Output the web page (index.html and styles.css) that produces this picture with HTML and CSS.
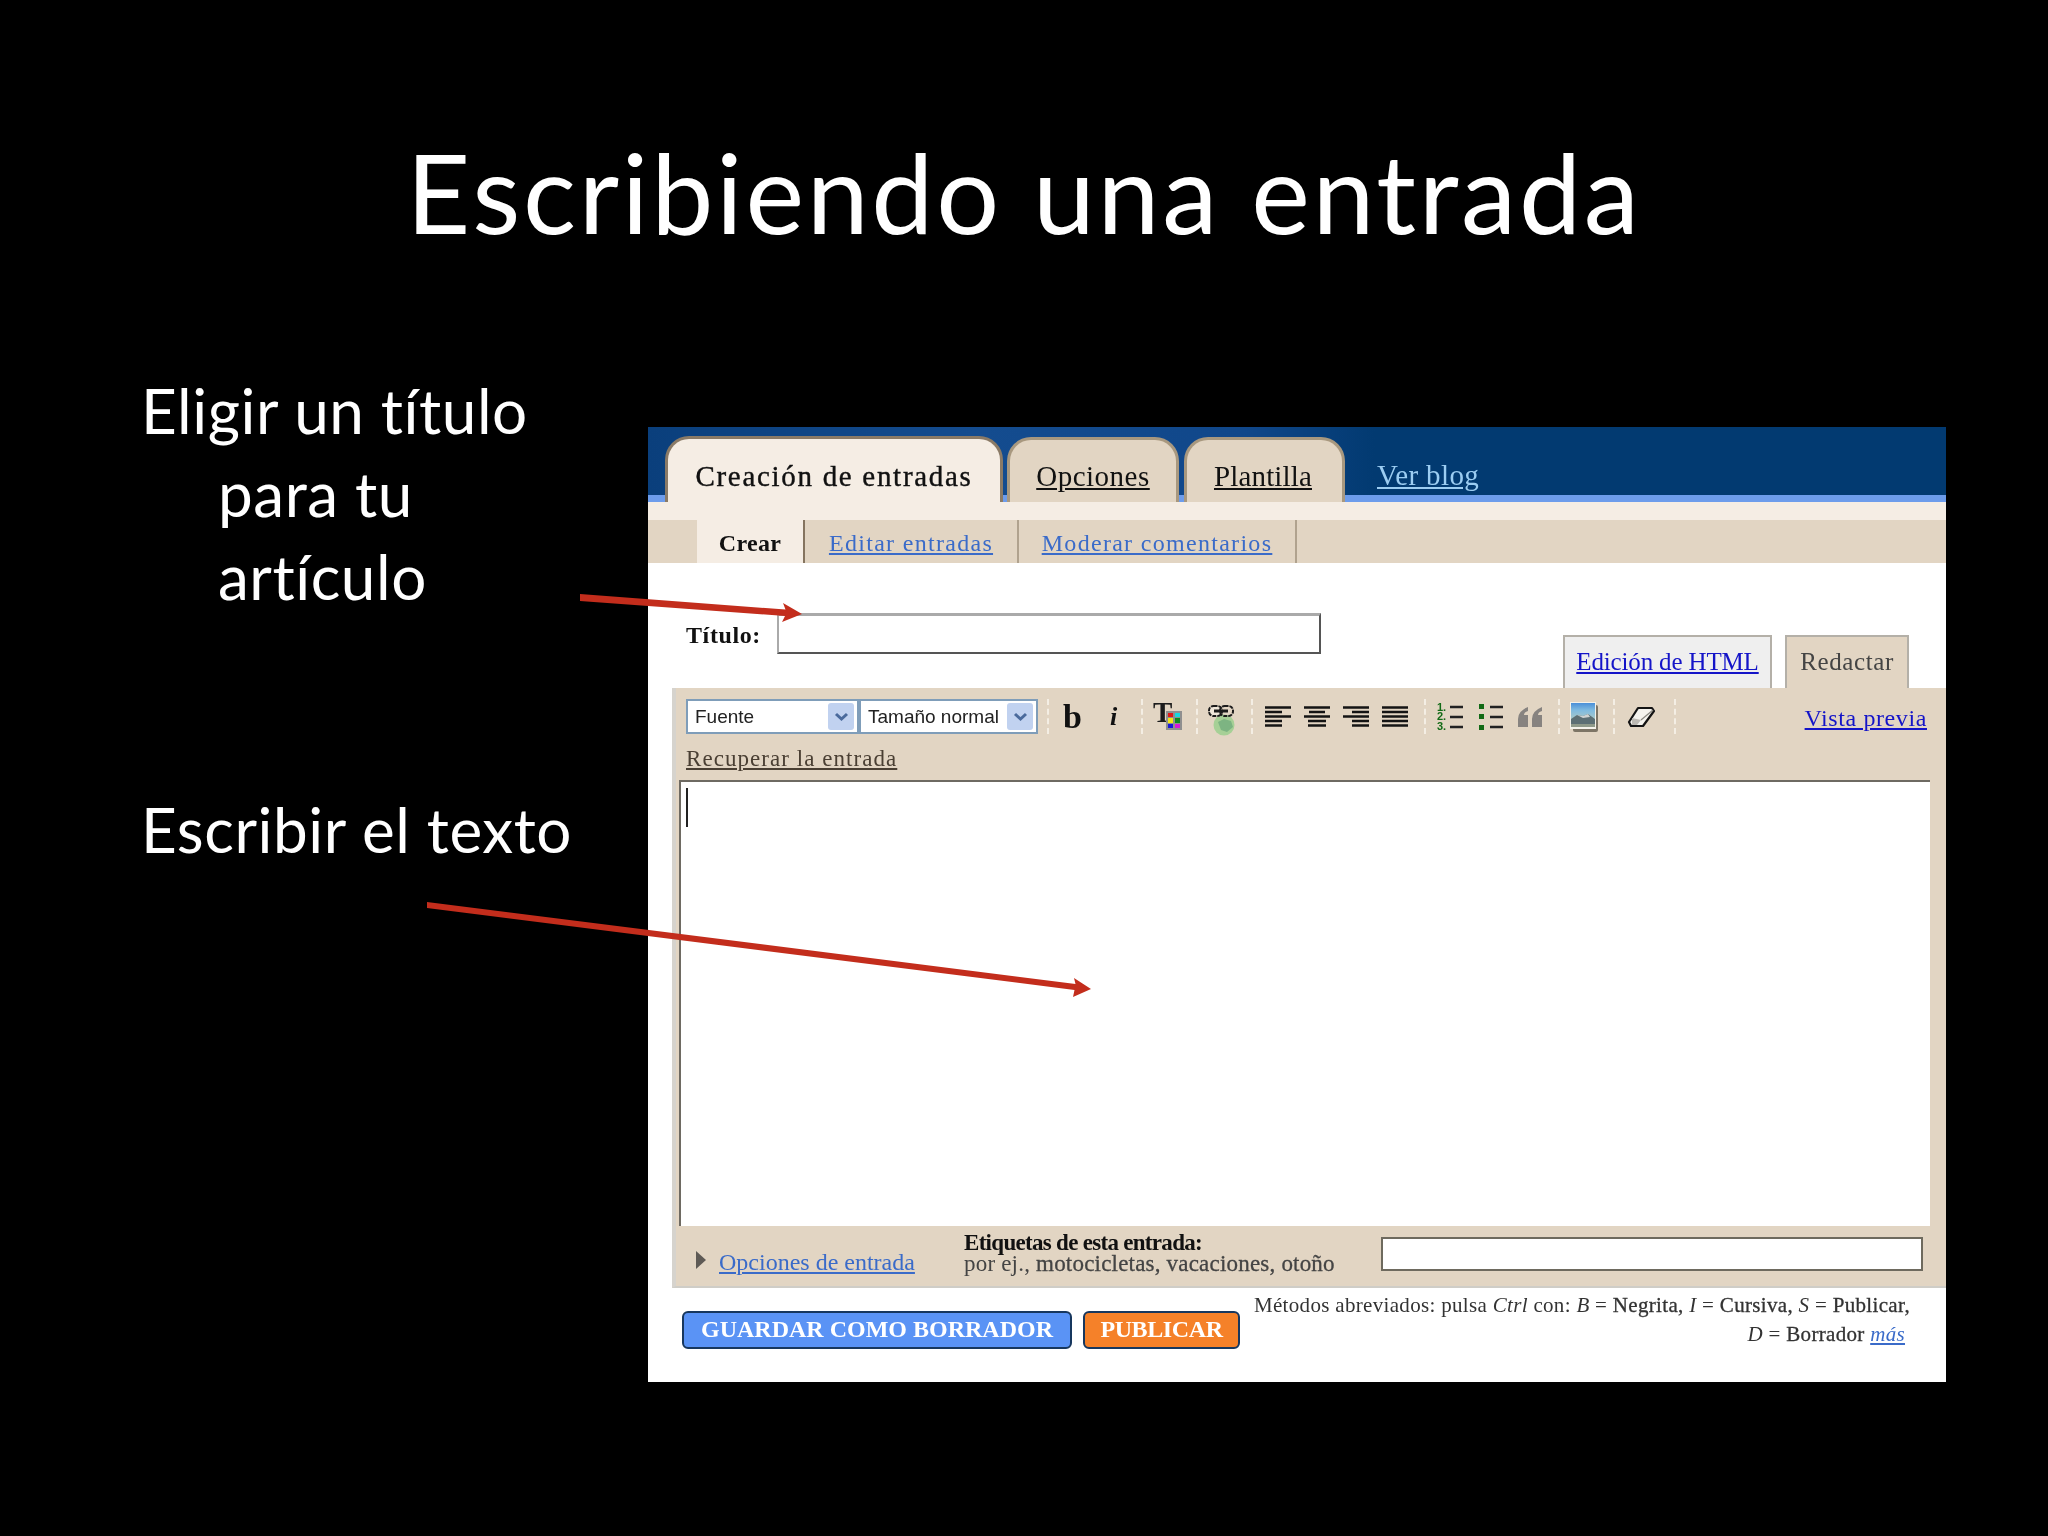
FILE: index.html
```html
<!DOCTYPE html>
<html lang="es">
<head>
    <meta charset="UTF-8">
    <title>Escribiendo una entrada</title>
    <link rel="stylesheet" href="styles.css">
</head>
<body>
<div class="slide">
    <h1 class="slide-title">Escribiendo una entrada</h1>

    <div class="slide-body">
        <div class="notes">
            <p class="note">Eligir un título<br><span class="indent">para tu</span><br><span class="indent">artículo</span></p>
            <p class="note note-second">Escribir el texto</p>
        </div>

        <div class="shot">
            <!-- Pestañas principales -->
            <div class="top-bar">
                <a class="top-tab top-tab-active">Creación de entradas</a>
                <a class="top-tab top-tab-options"><u>Opciones</u></a>
                <a class="top-tab top-tab-template"><u>Plantilla</u></a>
                <a class="view-blog">Ver blog</a>
            </div>
            <div class="cream-strip"></div>
            <div class="sub-nav">
                <a class="sub-tab sub-create">Crear</a>
                <a class="sub-tab sub-edit"><u>Editar entradas</u></a>
                <a class="sub-tab sub-moderate"><u>Moderar comentarios</u></a>
            </div>

            <div class="title-area">
                <label class="title-label">Título:</label>
                <div class="title-input"></div>
                <div class="mode-tabs">
                    <a class="mode-tab mode-html"><u>Edición de HTML</u></a>
                    <a class="mode-tab mode-write">Redactar</a>
                </div>
            </div>

            <!-- Editor -->
            <div class="editor">
                <div class="toolbar">
                    <div class="select select-font"><span>Fuente</span><i class="select-arrow"><svg width="15" height="10" viewBox="0 0 15 10"><path d="M2 2l5.500 5 5.500-5" fill="none" stroke="#4a6a9c" stroke-width="3"/></svg></i></div>
                    <div class="select select-size"><span>Tamaño normal</span><i class="select-arrow"><svg width="15" height="10" viewBox="0 0 15 10"><path d="M2 2l5.500 5 5.500-5" fill="none" stroke="#4a6a9c" stroke-width="3"/></svg></i></div>

                    <div class="group group-format">
                        <span class="tool tool-bold">b</span>
                        <span class="tool tool-italic">i</span>
                    </div>
                    <div class="group group-one">
                        <svg class="icon-color" width="30" height="29" viewBox="0 0 30 29">
                            <text x="0" y="20" class="svg-t">T</text>
                            <rect x="13" y="9" width="16" height="19" fill="#8f8f8f"/>
                            <rect x="15" y="11" width="5" height="4" fill="#e01818"/><rect x="22" y="11" width="5" height="4" fill="#18d8e0"/>
                            <rect x="15" y="16" width="5" height="5" fill="#f2e818"/><rect x="22" y="16" width="5" height="5" fill="#0f8a1f"/>
                            <rect x="15" y="22" width="5" height="4" fill="#1818d8"/><rect x="22" y="22" width="5" height="4" fill="#d818d8"/>
                        </svg>
                    </div>
                    <div class="group group-one">
                        <svg class="icon-link" width="30" height="38" viewBox="0 0 30 38">
                            <circle cx="16" cy="27" r="10.500" fill="#a6d096"/>
                            <path d="M10 24l6-3 7 2 2 6-6 5-6-2z" fill="#7db482"/>
                            <rect x="1" y="8" width="13" height="10" rx="4.500" fill="#efe7da" stroke="#1c1c1c" stroke-width="2" stroke-dasharray="4 1"/>
                            <rect x="12" y="8" width="13" height="10" rx="4.500" fill="none" stroke="#1c1c1c" stroke-width="2" stroke-dasharray="4 1"/>
                            <path d="M6 13h14" stroke="#1c1c1c" stroke-width="3"/>
                        </svg>
                    </div>
                    <div class="group group-align">
                        <span class="tool-align"><svg width="26" height="22" viewBox="0 0 26 22"><path d="M0 1.500h26M0 6h17M0 10.500h26M0 15h17M0 19.500h17" stroke="#141414" stroke-width="2.500"/></svg></span>
                        <span class="tool-align"><svg width="26" height="22" viewBox="0 0 26 22"><path d="M0 1.500h26M5 6h16M0 10.500h26M4 15h18M4 19.500h18" stroke="#141414" stroke-width="2.500"/></svg></span>
                        <span class="tool-align"><svg width="26" height="22" viewBox="0 0 26 22"><path d="M0 1.500h26M9 6h17M0 10.500h26M9 15h17M9 19.500h17" stroke="#141414" stroke-width="2.500"/></svg></span>
                        <span class="tool-align"><svg width="26" height="22" viewBox="0 0 26 22"><path d="M0 1.500h26M0 6h26M0 10.500h26M0 15h26M0 19.500h26" stroke="#141414" stroke-width="2.500"/></svg></span>
                    </div>
                    <div class="group group-list">
                        <span class="tool-list"><svg width="26" height="30" viewBox="0 0 26 30">
                            <text x="0" y="9" class="svg-num">1.</text><text x="0" y="18" class="svg-num">2.</text><text x="0" y="28" class="svg-num">3.</text>
                            <path d="M13 5h13M13 15h13M13 25h13" stroke="#222" stroke-width="2.500"/>
                        </svg></span>
                        <span class="tool-list"><svg width="26" height="30" viewBox="0 0 26 30">
                            <path d="M2 2h5v5H2zM2 12h5v5H2zM2 23h5v5H2z" fill="#126a16"/>
                            <path d="M13 5h13M13 15h13M13 25h13" stroke="#222" stroke-width="2.500"/>
                        </svg></span>
                        <span class="tool-list"><svg width="26" height="22" viewBox="0 0 26 22">
                            <path d="M11 1Q1 5 1 13v8h10V9H7q0-3 4-4zM25 1Q15 5 15 13v8h10V9h-4q0-3 4-4z" fill="#878380"/>
                        </svg></span>
                    </div>
                    <div class="group group-one group-image">
                        <svg width="30" height="31" viewBox="0 0 30 31">
                            <defs>
                                <linearGradient id="sky" x1="0" y1="0" x2="0" y2="1">
                                    <stop offset="0" stop-color="#4a8fd8"/>
                                    <stop offset="0.45" stop-color="#7fbbe0"/>
                                    <stop offset="1" stop-color="#a8c8c8"/>
                                </linearGradient>
                            </defs>
                            <rect x="4" y="4" width="25" height="27" rx="2" fill="#7d7566"/>
                            <rect x="1" y="1" width="26" height="27" fill="#f4f2ea"/>
                            <rect x="2" y="2" width="24" height="16" fill="url(#sky)"/>
                            <path d="M2 18l6-4 6 1 5-2 7 5v8H2z" fill="#5c6f74"/>
                            <path d="M8 14l6 1 5-2 2 3-7 1z" fill="#cfd3d2"/>
                            <path d="M2 23h24v3H2z" fill="#8f9a8a"/>
                        </svg>
                    </div>
                    <div class="group group-eraser">
                        <svg width="28" height="22" viewBox="0 0 28 22">
                            <path d="M11 2h14l2 3-11 15H4l-2-4z" fill="#f5f3ee" stroke="#141414" stroke-width="2.200" stroke-linejoin="round"/>
                            <path d="M5 12l9 2-4 5H5z" fill="#bdbab4"/>
                            <path d="M14 14L26 4" stroke="#8a8880" stroke-width="1.200"/>
                        </svg>
                    </div>
                    <div class="group group-end"></div>
                    <a class="preview-link"><u>Vista previa</u></a>
                </div>

                <a class="recover-link"><u>Recuperar la entrada</u></a>

                <div class="text-box"><span class="caret"></span></div>

                <div class="meta-row">
                    <span class="triangle"></span>
                    <a class="post-options"><u>Opciones de entrada</u></a>
                    <div class="labels-hint">
                        <strong>Etiquetas de esta entrada:</strong>
                        <span>por ej., <b>motocicletas, vacaciones, otoño</b></span>
                    </div>
                    <div class="labels-input"></div>
                </div>
            </div>

            <div class="actions">
                <a class="btn btn-draft">GUARDAR COMO BORRADOR</a>
                <a class="btn btn-publish">PUBLICAR</a>
                <p class="shortcuts">Métodos abreviados: pulsa <em>Ctrl</em> con: <em>B</em> = <b>Negrita,</b> <em>I</em> = <b>Cursiva,</b> <em>S</em> = <b>Publicar,</b><br><span class="shortcuts-end"><em>D</em> = <b>Borrador</b> <a class="more-link"><u><em>más</em></u></a></span></p>
            </div>
        </div>
    </div>

    <!-- Flechas rojas sobre la captura -->
    <svg class="arrows" width="2048" height="1536" viewBox="0 0 2048 1536">
        <path d="M580 594L785.500 609.500L783 603L802 614L782 622L785 616L580 601z" fill="#c32d1c"/>
        <path d="M427 902L1075.500 984L1074 978L1091 989L1073 997L1074.500 990L427 908z" fill="#c32d1c"/>
    </svg>
</div>
</body>
</html>
```

FILE: styles.css
```css
* {
    box-sizing: border-box;
}
body {
    margin: 0;
    background-color: #000;
}
.slide {
    position: relative;
    width: 2048px;
    height: 1536px;
    overflow: hidden;
    background-color: #000;
    color: #fff;
    font-family: Lato, "Open Sans", sans-serif;
    font-variant-ligatures: none;
}
.slide-title {
    margin: 0;
    padding-top: 126px;
    height: 369px;
    font-size: 111px;
    line-height: 130px;
    font-weight: 400;
    letter-spacing: 2.7px;
    text-align: center;
}
.slide-body {
    display: flex;
    align-items: flex-start;
}
.notes {
    width: 648px;
    padding-left: 141px;
}
.note {
    margin: 0;
    font-size: 62px;
    line-height: 83px;
    letter-spacing: 0.55px;
}
.indent {
    margin-left: 77px;
}
.note-second {
    margin-top: 170px;
}
.arrows {
    position: absolute;
    top: 0;
    left: 0;
}

/* captura de pantalla */
.shot {
    width: 1298px;
    height: 955px;
    margin-top: 58px;
    background-color: #fff;
    color: #111;
    font-family: "Liberation Serif", serif;
    filter: blur(0.5px);
}
.top-bar {
    display: flex;
    align-items: flex-end;
    height: 75px;
    padding-left: 17px;
    background: linear-gradient(90deg, #0a3f7c 0%, #144c8f 25%, #10478a 46%, #023a71 56%, #023a71 100%);
    border-bottom: 7px solid #6d9ceb;
}
.top-tab {
    display: flex;
    align-items: center;
    height: 65px;
    margin-bottom: -7px;
    padding-top: 11px;
    border: 3px solid #a8987f;
    border-bottom: none;
    border-radius: 24px 24px 0 0;
    background-color: #e2d5c3;
    font-size: 29px;
    letter-spacing: 0.5px;
    color: #111;
    justify-content: center;
}
.top-tab-active {
    width: 338px;
    height: 66px;
    background-color: #f5ede4;
    border-color: #8a7a66;
    letter-spacing: 1.7px;
    -webkit-text-stroke: 0.4px #111;
}
.top-tab-options {
    width: 172px;
    margin-left: 4px;
}
.top-tab-template {
    width: 161px;
    margin-left: 5px;
    padding-right: 3px;
    letter-spacing: 0.15px;
}
.view-blog {
    margin-left: 32px;
    margin-bottom: -4px;
    line-height: 48px;
    font-size: 29px;
    color: #9ccdf2;
    text-decoration: underline;
    letter-spacing: 0.4px;
}
.cream-strip {
    height: 18px;
    background-color: #f5ede4;
}
.sub-nav {
    display: flex;
    height: 43px;
    padding-left: 49px;
    background-color: #e2d5c3;
    font-size: 24px;
}
.sub-tab {
    display: flex;
    align-items: center;
    justify-content: center;
    padding-top: 3px;
    line-height: 30px;
    border-right: 2px solid #b0a28e;
    color: #3a6bc9;
    letter-spacing: 1.3px;
}
.sub-create {
    width: 108px;
    background-color: #f5ede4;
    color: #111;
    font-weight: 700;
    letter-spacing: 0.3px;
    border-right-color: #85745f;
}
.sub-edit {
    width: 214px;
}
.sub-moderate {
    width: 278px;
}

/* titulo */
.title-area {
    display: flex;
    height: 125px;
    padding-left: 38px;
    padding-top: 50px;
}
.title-label {
    width: 91px;
    padding-top: 3px;
    line-height: 39px;
    font-size: 24px;
    font-weight: 700;
    letter-spacing: 0.6px;
}
.title-input {
    width: 544px;
    height: 41px;
    background-color: #fff;
    border: 2px solid #555;
    border-top: 3px solid #aaa;
    border-left: 2px solid #aaa;
}
.mode-tabs {
    display: flex;
    margin-left: 242px;
    margin-top: 22px;
    height: 53px;
    font-size: 25px;
}
.mode-tab {
    display: flex;
    align-items: center;
    justify-content: center;
    padding-bottom: 2px;
    border: 2px solid #b4b0a8;
    border-bottom: none;
}
.mode-html {
    width: 209px;
    background-color: #efefef;
    color: #1414c8;
    letter-spacing: -0.15px;
}
.mode-write {
    width: 124px;
    margin-left: 13px;
    background-color: #e2d5c3;
    color: #444;
    letter-spacing: 0.6px;
}

/* editor */
.editor {
    margin-left: 24px;
    height: 600px;
    padding-top: 11px;
    background-color: #e2d5c3;
    border-left: 4px solid #d6d3cd;
    border-bottom: 2px solid #cfcdc7;
}
.toolbar {
    display: flex;
    align-items: center;
    height: 35px;
    padding-left: 10px;
    padding-right: 19px;
}
.select {
    display: flex;
    align-items: center;
    justify-content: space-between;
    height: 35px;
    padding: 3px 3px 3px 7px;
    background-color: #fff;
    border: 2px solid #7f9db9;
    font-family: "Liberation Sans", sans-serif;
    font-size: 19px;
    color: #222;
}
.select-font {
    width: 173px;
}
.select-size {
    width: 179px;
    margin-right: 9px;
}
.select-arrow {
    display: flex;
    align-items: center;
    justify-content: center;
    width: 26px;
    height: 27px;
    background-color: #c1d2f0;
    border-radius: 3px;
}
.group {
    display: flex;
    align-items: center;
    height: 35px;
    border-left: 2px dashed #f4eee4;
}
.group-format {
    width: 94px;
    padding-left: 3px;
}
.tool {
    width: 41px;
    text-align: center;
    font-weight: 700;
    color: #111;
}
.tool-bold {
    font-size: 34px;
}
.tool-italic {
    font-size: 26px;
    font-style: italic;
}
.group-one {
    width: 55px;
    justify-content: center;
}
.group-image {
    padding-right: 5px;
}
.icon-color {
    margin-right: 3px;
}
.icon-link {
    margin-right: 3px;
    overflow: visible;
}
.svg-t {
    font-family: "Liberation Serif", serif;
    font-size: 29px;
    font-weight: 700;
    fill: #1c1c1c;
}
.svg-num {
    font-family: "Liberation Sans", sans-serif;
    font-size: 11px;
    font-weight: 700;
    fill: #126a16;
}
.group-align {
    width: 173px;
    padding-left: 5px;
}
.tool-align {
    display: flex;
    justify-content: center;
    width: 39px;
}
.group-list {
    width: 134px;
    padding-left: 4px;
}
.tool-list {
    display: flex;
    justify-content: center;
    width: 40px;
}
.group-eraser {
    width: 61px;
    padding-left: 12px;
}
.group-end {
    width: 2px;
}
.preview-link {
    margin-left: auto;
    padding-top: 4px;
    font-size: 24px;
    letter-spacing: 0.6px;
    color: #1414c8;
}
.recover-link {
    display: block;
    margin: 10px 0 0 10px;
    height: 36px;
    line-height: 30px;
    font-size: 23px;
    color: #4a3f33;
    letter-spacing: 1.05px;
}
.text-box {
    width: 1251px;
    height: 446px;
    margin: 0 0 0 3px;
    padding: 6px 0 0 5px;
    background-color: #fff;
    border-top: 2px solid #6e6a62;
    border-left: 2px solid #6e6a62;
}
.caret {
    display: block;
    width: 2px;
    height: 39px;
    background-color: #222;
}
.meta-row {
    display: flex;
    height: 57px;
    padding-left: 20px;
    padding-top: 9px;
    font-size: 23px;
}
.triangle {
    width: 0;
    height: 0;
    margin-top: 16px;
    border-left: 10px solid #5e5a55;
    border-top: 9px solid transparent;
    border-bottom: 9px solid transparent;
}
.post-options {
    margin-left: 13px;
    margin-top: 14px;
    width: 245px;
    color: #3a6bc9;
    font-size: 24px;
}
.labels-hint {
    display: flex;
    flex-direction: column;
    width: 417px;
    margin-top: -3px;
    line-height: 21px;
}
.labels-hint strong {
    letter-spacing: -0.7px;
}
.labels-hint span {
    color: #444;
    letter-spacing: 0.2px;
}
.labels-hint b {
    font-weight: 400;
    -webkit-text-stroke: 0.3px #444;
}
.labels-input {
    width: 542px;
    height: 34px;
    margin-top: 2px;
    background-color: #fff;
    border: 2px solid #6e6a5e;
}

/* botones */
.actions {
    display: flex;
    padding: 23px 0 0 34px;
}
.btn {
    display: flex;
    align-items: center;
    justify-content: center;
    height: 38px;
    padding-bottom: 2px;
    border: 2px solid #17375e;
    border-radius: 6px;
    color: #fff;
    font-size: 24px;
    font-weight: 700;
}
.btn-draft {
    width: 390px;
    background-color: #5a93f5;
}
.btn-publish {
    width: 157px;
    margin-left: 11px;
    background-color: #f58129;
    letter-spacing: -0.4px;
}
.shortcuts {
    flex: 1;
    margin: -20px 36px 0 0;
    text-align: right;
    font-size: 21px;
    line-height: 29px;
    letter-spacing: 0.32px;
    color: #333;
}
.shortcuts b {
    font-weight: 400;
    -webkit-text-stroke: 0.3px #333;
}
.shortcuts-end {
    margin-right: 5px;
}
.more-link {
    color: #3a6bc9;
}
```
